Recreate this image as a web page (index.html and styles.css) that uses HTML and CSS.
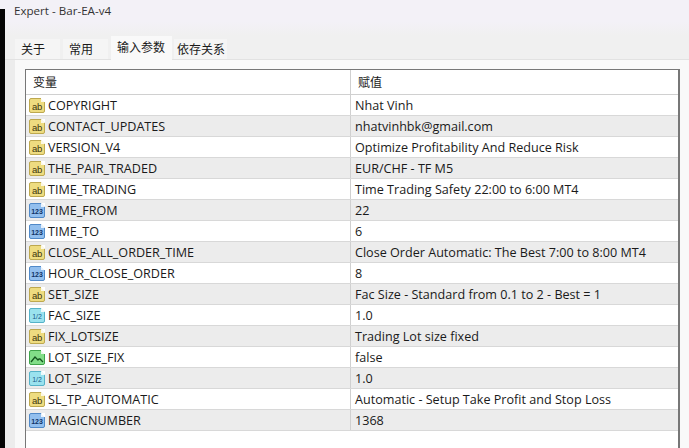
FILE: index.html
```html
<!DOCTYPE html>
<html lang="en">

<head>
    <meta charset="UTF-8">
    <title>Expert - Bar-EA-v4</title>
    <link rel="stylesheet" href="styles.css">
</head>

<body>
    <div class="edge"></div>
    <div class="window">
        <div class="title">Expert - Bar-EA-v4</div>
        <div class="tabs">
            <div class="tab">关于</div>
            <div class="tab">常用</div>
            <div class="tab active">输入参数</div>
            <div class="tab last">依存关系</div>
        </div>
        <div class="panel">
            <div class="table">
                <div class="row head">
                    <div class="name">变量</div>
                    <div class="value">赋值</div>
                </div>
                <div class="row"><div class="name"><span class="ico str">ab</span>COPYRIGHT</div><div class="value">Nhat Vinh</div></div>
                <div class="row"><div class="name"><span class="ico str">ab</span>CONTACT_UPDATES</div><div class="value">nhatvinhbk@gmail.com</div></div>
                <div class="row"><div class="name"><span class="ico str">ab</span>VERSION_V4</div><div class="value">Optimize Profitability And Reduce Risk</div></div>
                <div class="row"><div class="name"><span class="ico str">ab</span>THE_PAIR_TRADED</div><div class="value">EUR/CHF - TF M5</div></div>
                <div class="row"><div class="name"><span class="ico str">ab</span>TIME_TRADING</div><div class="value">Time Trading Safety 22:00 to 6:00 MT4</div></div>
                <div class="row"><div class="name"><span class="ico int">123</span>TIME_FROM</div><div class="value">22</div></div>
                <div class="row"><div class="name"><span class="ico int">123</span>TIME_TO</div><div class="value">6</div></div>
                <div class="row"><div class="name"><span class="ico str">ab</span>CLOSE_ALL_ORDER_TIME</div><div class="value">Close Order Automatic: The Best 7:00 to 8:00 MT4</div></div>
                <div class="row"><div class="name"><span class="ico int">123</span>HOUR_CLOSE_ORDER</div><div class="value">8</div></div>
                <div class="row"><div class="name"><span class="ico str">ab</span>SET_SIZE</div><div class="value">Fac Size - Standard from 0.1 to 2 - Best = 1</div></div>
                <div class="row"><div class="name"><span class="ico dbl">1/2</span>FAC_SIZE</div><div class="value">1.0</div></div>
                <div class="row"><div class="name"><span class="ico str">ab</span>FIX_LOTSIZE</div><div class="value">Trading Lot size fixed</div></div>
                <div class="row"><div class="name"><span class="ico bool"><svg width="14" height="10" viewBox="0 0 14 10"><path d="M1 8l4-5 3 3 1-1h1l3 3" fill="none" stroke="#14551e" stroke-width="1.3"/></svg></span>LOT_SIZE_FIX</div><div class="value">false</div></div>
                <div class="row"><div class="name"><span class="ico dbl">1/2</span>LOT_SIZE</div><div class="value">1.0</div></div>
                <div class="row"><div class="name"><span class="ico str">ab</span>SL_TP_AUTOMATIC</div><div class="value">Automatic - Setup Take Profit and Stop Loss</div></div>
                <div class="row"><div class="name"><span class="ico int">123</span>MAGICNUMBER</div><div class="value">1368</div></div>
            </div>
        </div>
    </div>
</body>

</html>
```

FILE: styles.css
```css
* {
    margin: 0;
    padding: 0;
    box-sizing: border-box;
}

html,
body {
    height: 448px;
    overflow: hidden;
}

body {
    display: flex;
    background: #f3f1f7;
    font-family: "Open Sans", "Noto Sans CJK SC", sans-serif;
    font-size: 12.6px;
    color: #1a1a1a;
}

/* strip of the dark desktop at the left */
.edge {
    width: 5px;
    margin-top: 9px;
    background: #050505;
}

.window {
    flex: 1;
    height: 448px;
    display: flex;
    flex-direction: column;
}

.title {
    height: 36px;
    padding: 3px 0 0 9px;
    background: linear-gradient(#f3f1f7 60%, #f0f0f0);
    font-size: 11.6px;
    line-height: 16px;
    color: #333;
}

.tabs {
    height: 24px;
    display: flex;
    align-items: flex-end;
    gap: 3px;
    padding-left: 10px;
    background: #f0f0f0;
    border-bottom: 1px solid #e2e2e2;
}

.tab {
    width: 45px;
    height: 20px;
    padding-left: 6px;
    font-size: 12px;
    line-height: 21px;
    background: #f5f5f5;
}

.tab.active {
    width: 61px;
    height: 24px;
    margin-bottom: -1px;
    background: #f9f9f9;
    line-height: 23px;
}

.tab.last {
    width: 53px;
    margin-left: -1px;
    padding-left: 3px;
}

.panel {
    flex: 1;
    background: linear-gradient(to right, #ececec 10px, #f9f9f9 10px);
    padding: 9px 9px 0 20px;
}

.table {
    height: 100%;
    background: #fff;
    border: 1px solid #777;
    border-bottom: 0;
    border-right-width: 2px;
}

.row {
    height: 21px;
    display: flex;
    align-items: center;
    border-bottom: 1px solid #d8d8d8;
}

.row:nth-child(odd) {
    background: #ececec;
}

.row.head {
    height: 25px;
    background: #fff;
    border-bottom: 1px solid #d0d0d0;
}

.name {
    width: 325px;
    height: 100%;
    display: flex;
    align-items: center;
    gap: 3px;
    padding-left: 3px;
    border-right: 1px solid #d0d0d0;
    white-space: nowrap;
}

.head .name {
    padding-left: 7px;
    font-size: 12px;
}

.value {
    padding-left: 4px;
    white-space: nowrap;
}

.head .value {
    padding-left: 7px;
    font-size: 12px;
}

/* type icons: a small sheet with a folded corner */
.ico {
    position: relative;
    width: 16px;
    height: 15px;
    flex: none;
    display: flex;
    align-items: center;
    justify-content: center;
    padding-top: 3px;
    border: 1px solid;
    border-radius: 2px 0 2px 2px;
    font-family: "Liberation Sans", sans-serif;
    line-height: 1;
}

.ico::after {
    content: "";
    position: absolute;
    top: -1px;
    right: -1px;
    width: 4px;
    height: 4px;
    background: linear-gradient(to top right, rgba(255, 255, 255, .8) 50%, #fff 50%);
}

.str {
    background: #eedc80;
    border-color: #bda84f;
    color: #40360c;
    font-size: 9.5px;
    letter-spacing: -.2px;
}

.int {
    background: #92bfee;
    border-color: #5089c8;
    color: #0f3468;
    font-size: 7px;
    font-weight: bold;
}

.dbl {
    background: #9ae2ee;
    border-color: #55b2c8;
    color: #1b5a8a;
    font-size: 7px;
}

.bool {
    background: #82de88;
    border-color: #3fa34a;
}
```
